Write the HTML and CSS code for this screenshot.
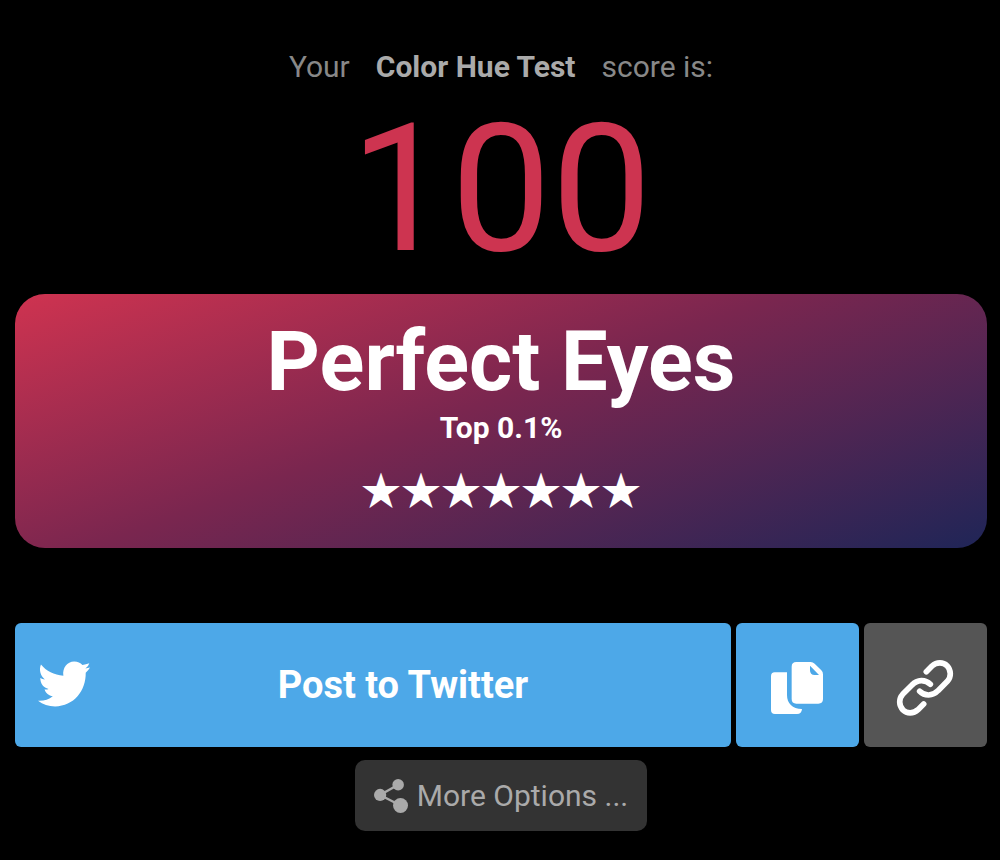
FILE: index.html
```html
<!DOCTYPE html>
<html lang="en">
<head>
<meta charset="utf-8">
<meta name="viewport" content="width=device-width, initial-scale=1">
<title>Color Hue Test</title>
<link rel="stylesheet" href="styles.css">
</head>
<body>
<main class="result">
  <p class="intro"><span>Your</span><strong>Color Hue Test</strong><span>score is:</span></p>
  <div class="score">100</div>
  <section class="card">
    <h1 class="rank">Perfect Eyes</h1>
    <p class="percentile">Top 0.1%</p>
    <p class="stars" aria-label="7 stars">★★★★★★★</p>
  </section>
  <div class="actions">
    <button class="button twitter" type="button">
      <svg class="bird" viewBox="113 151 158 138" aria-hidden="true"><path d="M122 161C138 181 162 193 190 195C187 172 201 152 223 152C234 152 242 156 248 162Q259 161 269 157Q266 167 257 173Q264 172 271 170Q266 179 258 186C259 240 222 288 165 288C145 288 128 283 113 271C130 272 146 267 158 257C146 256 136 248 133 236Q138 238 145 235C130 232 120 219 120 202Q126 206 134 206C121 196 115 178 122 161Z"/></svg>
      <span class="label">Post to Twitter</span>
    </button>
    <button class="button copy" type="button" aria-label="Copy">
      <svg class="icon" viewBox="147 149 168 168" aria-hidden="true">
        <path d="M164 186H201V254C201 279 217 296 246 296Q245 311 231 311H165Q153 311 153 299V198Q153 186 164 186Z"/>
        <path fill-rule="evenodd" d="M229 155H272Q279 155 284 160L304 180Q309 185 309 192V266Q309 280 295 280H229Q215 280 215 266V169Q215 155 229 155ZM270 166V180Q270 194 284 194H297Z"/>
      </svg>
    </button>
    <button class="button link" type="button" aria-label="Copy link">
      <svg class="icon stroke" viewBox="531 149 168 168" aria-hidden="true">
        <path d="M619 184L636 167C650 154 670 155 681 166C694 180 694 200 682 213L654 241C638 258 614 258 599 243"/>
        <path d="M611 281L594 298C580 311 560 310 549 299C536 285 536 265 548 252L576 224C592 207 616 207 631 222"/>
      </svg>
    </button>
  </div>
  <button class="more" type="button">
    <svg class="share" viewBox="104 92 100 100" aria-hidden="true">
      <path class="arms" d="M175 109L122 139L182 170"/>
      <circle cx="175" cy="109" r="17"/><circle cx="122" cy="139" r="18"/><circle cx="182" cy="170" r="22"/>
    </svg>
    <span>More Options ...</span>
  </button>
</main>
</body>
</html>
```
FILE: styles.css
```css
* {
  box-sizing: border-box;
}

body {
  margin: 0;
  background: #000;
  color: #888;
  font-family: Roboto, sans-serif;
  font-size: 30px;
  line-height: 36px;
}

.result {
  display: flex;
  flex-direction: column;
  align-items: center;
  padding: 49px 13px 28px 15px;
}

p,
h1 {
  margin: 0;
}

.intro {
  display: flex;
  flex-wrap: wrap;
  justify-content: center;
  column-gap: 26px;
}

.intro strong {
  color: #aaa;
}

.score {
  margin-top: 14px;
  color: #cd3450;
  font-size: 179px;
  line-height: 180px;
}

.card {
  width: 100%;
  margin-top: 15px;
  padding: 20px 20px 35px;
  border-radius: 30px;
  background: linear-gradient(160deg, #cf3350, #7a264f 46%, #1f2557);
  color: #fff;
  text-align: center;
}

.rank {
  font-size: 83px;
  line-height: 96px;
}

.percentile {
  font-weight: 700;
}

.stars {
  margin-top: 17px;
  font-family: "Noto Sans CJK SC", sans-serif;
  font-size: 40px;
  line-height: 50px;
}

.actions {
  display: flex;
  gap: 5px;
  width: 100%;
  margin-top: 75px;
}

.button {
  display: flex;
  align-items: center;
  justify-content: center;
  flex: 0 0 auto;
  width: 123px;
  height: 124px;
  padding: 5px 1px 0 0;
  border: 0;
  border-radius: 6px;
  background: #4da8e8;
  color: #fff;
  cursor: pointer;
}

.twitter {
  flex: 1;
  padding: 0 23px 2px;
  font: 700 38px/44px Roboto, sans-serif;
}

.label {
  flex: 1;
  padding: 2px 0 0 8px;
}

.link {
  background: #555;
}

.bird {
  width: 52px;
  height: 46px;
  fill: #fff;
}

.icon {
  width: 56px;
  height: 56px;
  fill: #fff;
}

.stroke {
  overflow: visible;
  fill: none;
  stroke: #fff;
  stroke-width: 17;
  stroke-linecap: round;
  stroke-linejoin: round;
}

.more {
  display: flex;
  align-items: center;
  gap: 9px;
  margin-top: 13px;
  padding: 18px 19px 17px;
  border: 0;
  border-radius: 10px;
  background: #333;
  color: #aaa;
  font: 400 30px/36px Roboto, sans-serif;
  cursor: pointer;
}

.share {
  width: 34px;
  height: 34px;
  fill: #aaa;
}

.arms {
  fill: none;
  stroke: #aaa;
  stroke-width: 7;
}
```
